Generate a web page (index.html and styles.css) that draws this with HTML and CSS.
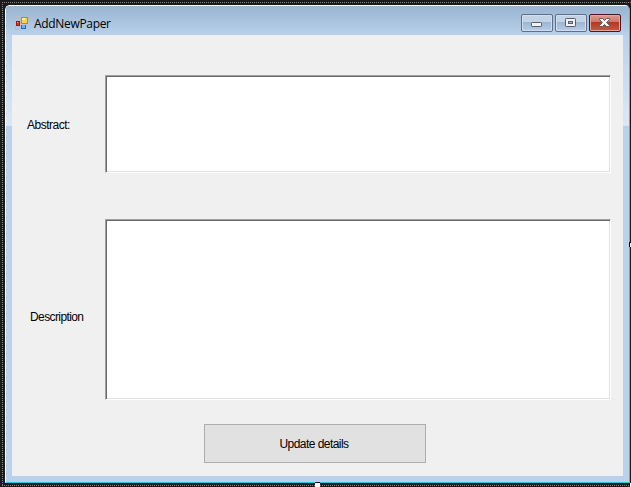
FILE: index.html
```html
<!DOCTYPE html>
<html lang="en">
<head>
<meta charset="utf-8">
<title>AddNewPaper</title>
<link rel="stylesheet" href="styles.css">
</head>
<body>
<div class="designer">
  <main class="window">
    <header class="titlebar">
      <svg class="app-icon" width="14" height="14" viewBox="0 0 14 14" shape-rendering="crispEdges">
        <path d="M.5 4.5V.5H5M.5 9.5V13.500H4M5.500 4V.5M4.500 9v4" fill="none" stroke="#b9bcc0"/>
        <rect x="6" y="1" width="7" height="7" fill="#b98a2c"/>
        <rect x="7" y="2" width="5" height="5" fill="#fbd348"/>
        <rect x="7" y="2" width="3" height="2" fill="#ffed99"/>
        <rect x="1" y="5" width="4" height="5" fill="#9c1710"/>
        <rect x="2" y="6" width="2" height="3" fill="#d93c25"/>
        <rect x="2" y="6" width="1" height="1" fill="#f7a38a"/>
        <path d="M5 8v5.500h8.500V8" fill="none" stroke="#c2c4c8"/>
        <rect x="6" y="9" width="5" height="4" fill="#3260bd"/>
        <rect x="7" y="9" width="3" height="3" fill="#78a9f5"/>
      </svg>
      <h1 class="title">AddNewPaper</h1>
      <div class="controls">
        <span class="control">
          <svg width="32" height="18" viewBox="0 0 32 18"><rect x="10.500" y="8.500" width="10" height="4" rx=".7" fill="#f2f2f2" stroke="#555d70"/></svg>
        </span>
        <span class="control">
          <svg width="32" height="18" viewBox="0 0 32 18"><rect x="10.500" y="4.500" width="10" height="8" rx=".7" fill="#f2f2f2" stroke="#555d70"/><rect x="13.500" y="7.500" width="4" height="2" fill="#9db9d8" stroke="#555d70"/></svg>
        </span>
        <span class="control close">
          <svg width="32" height="18" viewBox="0 0 32 18"><path d="M10.500 4.500h3l2 2 2-2h3v1L17.700 8.500l2.800 3v1h-3l-2-2-2 2h-3v-1l2.800-3-2.800-3z" fill="#f5f5f5" stroke="#555d70"/></svg>
        </span>
      </div>
    </header>
    <section class="form">
      <label class="label abstract-label" for="abstract">Abstract:</label>
      <textarea class="field" id="abstract"></textarea>
      <label class="label description-label" for="description">Description</label>
      <textarea class="field" id="description"></textarea>
      <button class="update" type="button"><span class="update-text">Update details</span></button>
    </section>
  </main>
  <i class="handle handle-right"></i>
  <i class="handle handle-bottom"></i>
  <i class="handle handle-corner"></i>
</div>
</body>
</html>
```
FILE: styles.css
```css
* { box-sizing: border-box; }
body { margin: 0; overflow: hidden; }
.designer {
  position: relative;
  width: 631px;
  height: 487px;
  padding: 5px 1px 4px 5px;
  background:
    repeating-linear-gradient(90deg, #858585 0 1px, transparent 1px 2px) 2px 2px / 629px 1px no-repeat,
    repeating-linear-gradient(90deg, #858585 0 1px, transparent 1px 2px) 2px 485px / 627px 1px no-repeat,
    repeating-linear-gradient(180deg, #858585 0 1px, transparent 1px 2px) 2px 2px / 1px 484px no-repeat,
    #1b1b1b;
}
.window {
  width: 625px;
  height: 478px;
  padding: 0 6px 6px;
  border: 1px solid #fff;
  border-right-color: #20c8ee;
  border-bottom-color: #20c8de;
  border-radius: 5px 5px 0 0;
  background:
    linear-gradient(180deg, #b9d1ea 0, #dce7f5 93px, #d7e4f4 95px, transparent 95px) 0 25px / 100% 95px no-repeat,
    #b9d1ea;
  background-clip: padding-box;
}
.titlebar {
  display: flex;
  height: 29px;
  margin: 0 -6px;
  padding: 0 8px 0 9px;
  border-radius: 4px 4px 0 0;
  background: linear-gradient(#99b4d1, #b9d1ea);
}
.app-icon { margin-top: 10px; }
.title {
  margin: 9px 0 0 5px;
  color: #000;
  font: 400 12px/17px "Open Sans", sans-serif;
  letter-spacing: -.32px;
}
.controls { display: flex; gap: 2px; margin: 8px 0 0 auto; }
.control {
  width: 32px;
  height: 18px;
  border: 1px solid #626e88;
  border-radius: 2px;
  box-shadow: inset 0 0 0 1px #d0deed;
  background: linear-gradient(#c3d3e6 0 45%, #9bb5d2 45%, #b7cee6);
}
.control svg { display: block; margin: -1px; }
.close {
  border-color: #4c1524;
  box-shadow: inset 0 0 0 1px #e0a79b;
  background: linear-gradient(#dc9b8e 0, #ce7465 45%, #b83620 45%, #c85945);
}
.form {
  display: grid;
  grid-template: 98px 181px 39px / 93px 506px;
  row-gap: 46px;
  width: 611px;
  height: 441px;
  padding-top: 40px;
  background: #f0f0f0;
}
.label {
  align-self: center;
  width: max-content;
  color: #000;
  font: 12px/14px "Liberation Sans", Arial, sans-serif;
  letter-spacing: -.6px;
}
.abstract-label { margin: 2px 0 0 15px; letter-spacing: -.5px; }
.description-label { margin: 15px 0 0 18px; }
.field {
  width: 506px;
  height: 100%;
  margin: 0;
  padding: 3px;
  resize: none;
  outline: 0;
  border: 1px solid;
  border-color: #a0a0a0 #fff #fff #a0a0a0;
  border-radius: 0;
  box-shadow: inset 1px 1px #696969, inset -1px -1px #e3e3e3;
  background: #fff;
}
.update {
  grid-column: 1 / -1;
  width: 222px;
  height: 39px;
  margin: -22px 0 0 192px;
  padding: 0;
  border: 1px solid #adadad;
  background: #e1e1e1;
  color: #000;
  font: 12px/14px "Liberation Sans", Arial, sans-serif;
  letter-spacing: -.55px;
}
.update-text { position: relative; left: -1px; }
.handle { position: absolute; background: #fff; }
.handle-right { left: 629px; top: 242px; width: 2px; height: 5px; border: solid #000; border-width: 1px 0 0 1px; }
.handle-bottom { left: 315px; top: 482px; width: 5px; height: 5px; border-top: 1px solid #000; }
.handle-corner { left: 630px; top: 483px; width: 1px; height: 4px; }
```
